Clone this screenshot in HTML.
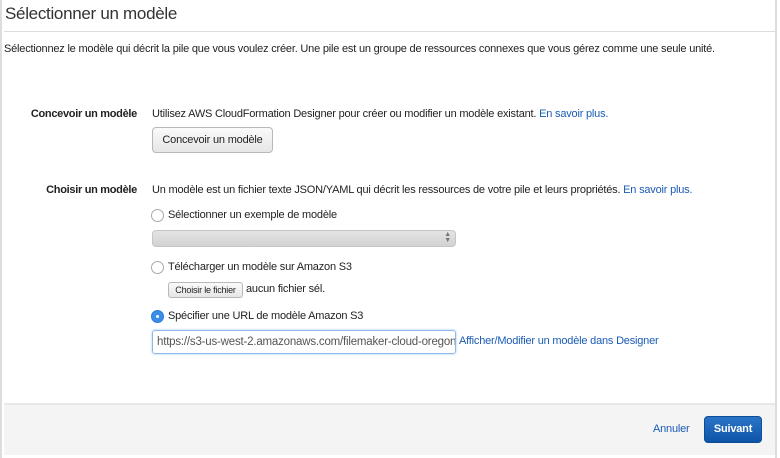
<!DOCTYPE html>
<html><head><meta charset="utf-8"><style>
body{margin:0;width:780px;height:458px;background:#fff;font-family:"Liberation Sans",Arial,sans-serif;font-size:11px;letter-spacing:-0.2px;color:#222;position:relative;overflow:hidden}
.a{position:absolute;white-space:nowrap}
a,.l{color:#1a5bb5}
.btn{position:absolute;border:1px solid #b8b8b8;border-radius:4px;background:linear-gradient(#fafafa,#e6e6e6);text-align:center}
.radio{position:absolute;width:11px;height:11px;border:1px solid #aaa;border-radius:50%;background:#fff}
.lab{position:absolute;right:643px;font-weight:bold;white-space:nowrap;letter-spacing:-0.3px}
</style></head><body>
<div class="a" style="left:0;top:0;width:2px;height:458px;background:#ddd"></div>
<div class="a" style="left:775px;top:0;width:2px;height:458px;background:#ddd"></div>
<div class="a" style="left:5px;top:4px;font-size:17px;letter-spacing:-0.3px;color:#333">Sélectionner un modèle</div>
<div class="a" style="left:4px;top:31px;width:771px;height:1px;background:#ddd"></div>
<div class="a" style="left:4px;top:43px">Sélectionnez le modèle qui décrit la pile que vous voulez créer. Une pile est un groupe de ressources connexes que vous gérez comme une seule unité.</div>
<div class="lab" style="top:108px">Concevoir un modèle</div>
<div class="a" style="left:152px;top:108px">Utilisez AWS CloudFormation Designer pour créer ou modifier un modèle existant. <span class="l">En savoir plus.</span></div>
<div class="btn" style="left:152px;top:127px;width:119px;height:24px;line-height:24px">Concevoir un modèle</div>
<div class="lab" style="top:184px">Choisir un modèle</div>
<div class="a" style="left:152px;top:184px">Un modèle est un fichier texte JSON/YAML qui décrit les ressources de votre pile et leurs propriétés. <span class="l">En savoir plus.</span></div>
<div class="radio" style="left:151px;top:209px"></div>
<div class="a" style="left:168px;top:209px">Sélectionner un exemple de modèle</div>
<div class="a" style="left:152px;top:230px;width:302px;height:15px;border-radius:4px;background:linear-gradient(#e4e4e4,#d2d2d2);border:1px solid #c6c6c6"><span style="position:absolute;right:4px;top:1px;font-size:7px;line-height:6px;color:#777">▲<br>▼</span></div>
<div class="radio" style="left:151px;top:261px"></div>
<div class="a" style="left:168px;top:261px">Télécharger un modèle sur Amazon S3</div>
<div class="btn" style="left:168px;top:282px;width:73px;height:14px;line-height:14px;font-size:9px;border-radius:3px">Choisir le fichier</div>
<div class="a" style="left:246px;top:283px">aucun fichier sél.</div>
<div class="a" style="left:151px;top:310px;width:11px;height:11px;border-radius:50%;background:#3b8ee8;border:1px solid #2a7bd6"><div style="position:absolute;left:4px;top:4px;width:3px;height:3px;border-radius:50%;background:#fff"></div></div>
<div class="a" style="left:168px;top:310px">Spécifier une URL de modèle Amazon S3</div>
<div class="a" style="left:152px;top:330px;width:298px;height:22px;border:1px solid #8fb8e8;border-radius:3px;box-shadow:0 0 2px #9cc3f0;line-height:22px;padding-left:4px;color:#555;overflow:hidden;font-size:11.5px">https://s3-us-west-2.amazonaws.com/filemaker-cloud-oregon</div>
<div class="a l" style="left:459px;top:335px">Afficher/Modifier un modèle dans Designer</div>
<div class="a" style="left:4px;top:403px;width:771px;height:50px;background:#f4f4f4;border-top:2px solid #e8e8e8"></div>
<div class="a l" style="left:653px;top:423px">Annuler</div>
<div class="a" style="left:704px;top:416px;width:56px;height:25px;border-radius:4px;background:linear-gradient(#2a74c8,#0e55a8);border:1px solid #0c4d98;color:#fff;text-align:center;line-height:25px;font-weight:bold">Suivant</div>
</body></html>
